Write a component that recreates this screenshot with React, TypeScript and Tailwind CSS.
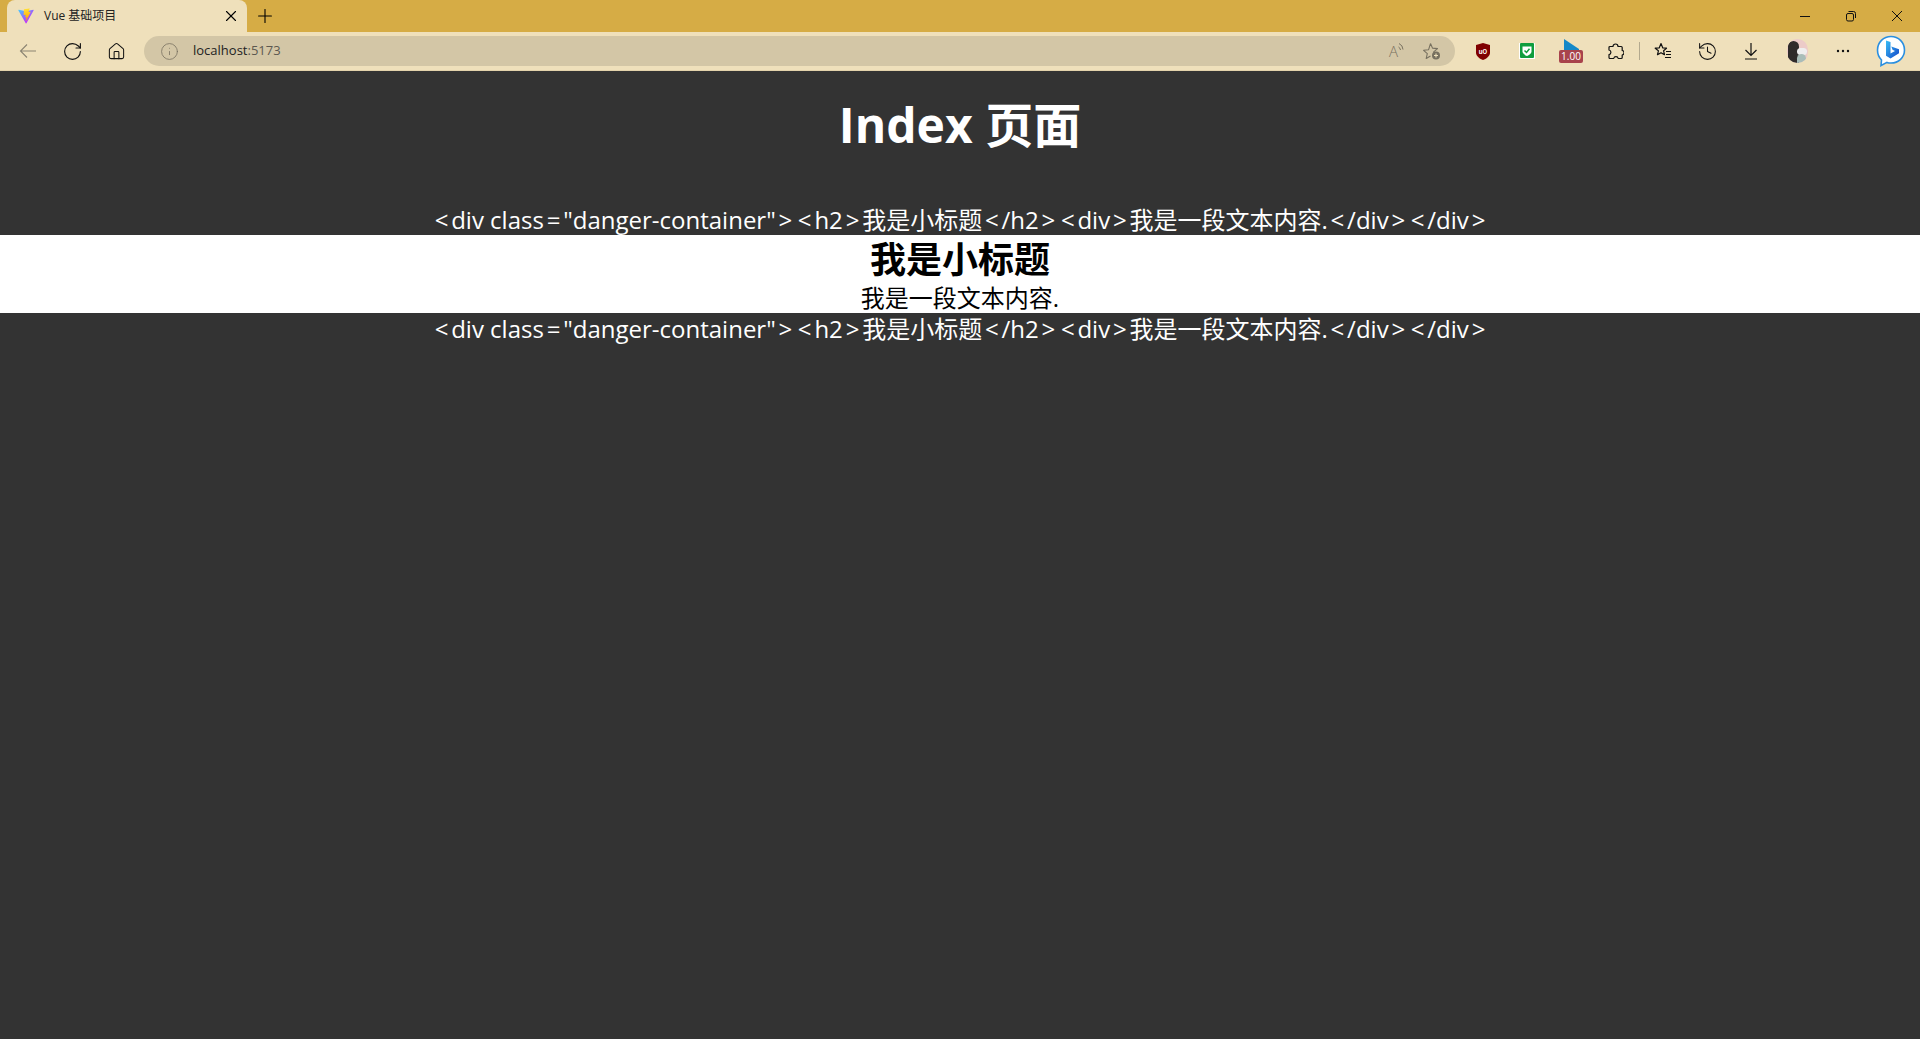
import React from 'react';
import { RotateCw, Home, Info, X, Plus, History } from 'lucide-react';

const font = "font-['Open_Sans','Noto_Sans_CJK_SC',sans-serif]";

const sourceLine = '<div class="danger-container"><h2>我是小标题</h2><div>我是一段文本内容.</div></div>';

// the screenshot's font has much wider < > = than Open Sans
const SourceLine = () => (
  <div className="text-[24px] leading-[31px]">
    {sourceLine.split(/([<>=])/).map((part, i) =>
      /^[<>=]$/.test(part) ? <span key={i} className="px-[2.8px]">{part}</span> : part
    )}
  </div>
);

const ViteLogo = () => (
  <svg width="16" height="16" viewBox="0 0 410 404">
    <defs>
      <linearGradient id="vbg" x1="6" y1="33" x2="235" y2="344" gradientUnits="userSpaceOnUse">
        <stop offset="0" stopColor="#41d1ff" />
        <stop offset="1" stopColor="#bd34fe" />
      </linearGradient>
      <linearGradient id="vbolt" x1="194" y1="8" x2="236" y2="292" gradientUnits="userSpaceOnUse">
        <stop offset="0" stopColor="#ffea83" />
        <stop offset="0.08" stopColor="#ffdd35" />
        <stop offset="1" stopColor="#ffa800" />
      </linearGradient>
    </defs>
    <path d="M399.641 59.5246L215.643 388.545C211.844 395.338 202.084 395.378 198.228 388.618L10.5817 59.5563C6.38087 52.1896 12.6802 43.2665 21.0281 44.7586L205.223 77.6824C206.398 77.8924 207.601 77.8904 208.776 77.6763L389.119 44.8058C397.439 43.2894 403.768 52.1434 399.641 59.5246Z" fill="url(#vbg)" />
    <path d="M292.965 1.5744L156.801 28.2552C154.563 28.6937 152.906 30.5903 152.771 32.8664L144.395 174.33C144.198 177.662 147.258 180.248 150.51 179.498L188.42 170.749C191.967 169.931 195.172 173.055 194.443 176.622L183.18 231.775C182.422 235.487 185.907 238.661 189.532 237.56L212.947 230.446C216.577 229.344 220.065 232.527 219.297 236.242L201.398 322.875C200.278 328.294 207.486 331.249 210.492 326.603L212.5 323.5L323.454 102.072C325.312 98.3645 322.108 94.137 318.036 94.9228L279.014 102.454C275.347 103.161 272.227 99.746 273.262 96.1583L298.731 7.86689C299.767 4.27314 296.636 0.855181 292.965 1.5744Z" fill="url(#vbolt)" />
  </svg>
);

const Slot: React.FC<{ children: React.ReactNode; className?: string }> = ({ children, className }) => (
  <div className={`w-[44px] h-[38px] flex items-center justify-center shrink-0 ${className ?? ''}`}>{children}</div>
);

const App: React.FC = () => {
  return (
    <div className={`h-[1039px] flex flex-col bg-[#333333] overflow-hidden ${font}`}>
      {/* tab strip */}
      <div className="h-8 bg-[#d6ac45] flex items-end shrink-0">
        <div className="ml-[7px] w-[240px] h-8 bg-[#efe0bb] rounded-t-lg flex items-center pl-[11px] pr-[7px]">
          <ViteLogo />
          <span className="ml-[10px] text-[12px] text-[#222] flex-1">Vue 基础项目</span>
          <X size={18} strokeWidth={1.5} className="text-black" />
        </div>
        <div className="ml-[7px] h-8 flex items-center">
          <Plus size={22} strokeWidth={1.2} className="text-black" />
        </div>
        <div className="flex-1" />
        <div className="h-8 flex items-center">
          <div className="w-[46px] flex justify-center">
            <svg width="12" height="12" viewBox="0 0 12 12" stroke="#111" strokeWidth="1"><path d="M1 6.5h10" /></svg>
          </div>
          <div className="w-[46px] flex justify-center">
            <svg width="12" height="12" viewBox="0 0 12 12" fill="none" stroke="#111" strokeWidth="1">
              <rect x="1.5" y="3.5" width="7" height="7.5" rx="1.5" />
              <path d="M3.5 1.5h5a2 2 0 0 1 2 2V8" />
            </svg>
          </div>
          <div className="w-[46px] flex justify-center">
            <svg width="12" height="12" viewBox="0 0 12 12" stroke="#111" strokeWidth="1"><path d="M1 1l10 10M11 1L1 11" /></svg>
          </div>
        </div>
      </div>

      {/* toolbar */}
      <div className="h-[38px] bg-[#efe0bb] border-b border-[#e3d3ac] flex items-center shrink-0 box-content pl-[6px]">
        <Slot>
          <svg width="18" height="16" viewBox="0 0 18 16" fill="none" stroke="#8b8472" strokeWidth="1.1">
            <path d="M17 8H1.5M8 1.5L1.5 8 8 14.5" />
          </svg>
        </Slot>
        <Slot><RotateCw size={21} strokeWidth={1.3} className="text-[#111]" /></Slot>
        <Slot><Home size={19} strokeWidth={1.3} className="text-[#111]" /></Slot>
        <div className="ml-[6px] w-[1311px] h-[30px] bg-[#d3c6a6] rounded-full flex items-center pl-[16px] pr-[14px] shrink-0">
          <Info size={19} strokeWidth={1} className="text-[#77705f]" />
          <span className="ml-[14px] text-[13px] text-[#222]">localhost<span className="text-[#5c5850]">:5173</span></span>
          <div className="flex-1" />
          <div className="flex items-start text-[#77705f] mr-[19px]">
            <span className="text-[15px] leading-[18px] font-light">A</span>
            <svg width="6" height="10" viewBox="0 0 6 10" fill="none" stroke="#77705f" strokeWidth="1">
              <path d="M0.5 5a4 4 0 0 1 2 3M1 1.5a7 7 0 0 1 4 6" />
            </svg>
          </div>
          <svg width="18" height="18" viewBox="0 0 18 18" fill="none" stroke="#77705f" strokeWidth="1.1">
            <path d="M7.5 1.5l2 4.6 5 .5-3.8 3.3 1 3.3M7.5 14l-4.3 2.5 1.1-4.9L.6 8.3l5-.6 1.9-6" strokeLinejoin="round" />
            <circle cx="13" cy="13.5" r="4" fill="#77705f" stroke="none" />
            <path d="M13 11.5v4M11 13.5h4" stroke="#efe0bb" />
          </svg>
        </div>

        {/* extensions */}
        <Slot className="ml-[6px]">
          <svg width="14" height="17" viewBox="0 0 14 17">
            <path d="M7 0 L14 2 V10 C14 13 10 16 7 17 C4 16 0 13 0 10 V2 Z" fill="#800000" />
            <text x="7" y="10.5" fontSize="6" fontWeight="700" fill="#fff" textAnchor="middle" fontFamily="Inter, sans-serif">uO</text>
          </svg>
        </Slot>
        <Slot>
          <svg width="16" height="16" viewBox="0 0 16 16">
            <rect width="16" height="16" fill="#fff" />
            <rect x="1" y="0" width="14" height="15" rx="1" fill="#0f9d3e" />
            <path d="M3.5 3.5 H12.5 V8.5 C12.5 10.5 9.5 12.5 8 13 C6.5 12.5 3.5 10.5 3.5 8.5 Z" fill="#fff" />
            <path d="M5.5 7.5 L7.5 9.5 L10.5 5.8" fill="none" stroke="#0f9d3e" strokeWidth="1.5" />
          </svg>
        </Slot>
        <Slot>
          <div className="relative w-[24px] h-[24px]">
            <svg className="absolute left-[5px] top-0" width="15" height="13" viewBox="0 0 15 13">
              <path d="M0 0 L15 10 V13 H0 Z" fill="#1488c8" />
            </svg>
            <div className="absolute left-0 bottom-0 w-[24px] h-[13px] rounded-[2px] bg-[#a8434c] text-white text-[10px] leading-[13px] text-center">1.00</div>
          </div>
        </Slot>
        <Slot>
          <svg width="17" height="17" viewBox="0 0 17 17" fill="none" stroke="#111" strokeWidth="1.2" strokeLinejoin="round">
            <path d="M6 3.5a2.5 2.5 0 0 1 5 0h3.2a1 1 0 0 1 1 1v3a2.3 2.3 0 0 1 0 4.5v2.5a1 1 0 0 1-1 1h-3a2.3 2.3 0 0 0-4.5 0H3a1 1 0 0 1-1-1v-2.8a2.4 2.4 0 0 0 0-4.7V4.5a1 1 0 0 1 1-1z" />
          </svg>
        </Slot>
        <div className="ml-[2px] w-px h-[18px] bg-[#b3a98e] shrink-0" />
        <Slot className="ml-[1px]">
          <svg width="18" height="18" viewBox="0 0 18 18" fill="none" stroke="#111" strokeWidth="1.2" strokeLinejoin="round">
            <path d="M7 1.5l1.8 4.4 3.7.3-2.9 2.6.9 3.9L7 10.7l-3.5 2 .9-3.9L1.2 6.2l4-.3z" />
            <path d="M12 9.5h5M12 12.5h5M11 15.5h6" />
          </svg>
        </Slot>
        <Slot><History size={21} strokeWidth={1.2} className="text-[#111]" /></Slot>
        <Slot>
          <svg width="16" height="18" viewBox="0 0 16 18" fill="none" stroke="#111" strokeWidth="1.2">
            <path d="M8 1v12M2.5 8L8 13.5 13.5 8M2 17h12" />
          </svg>
        </Slot>
        <Slot className="ml-[2px]">
          <div className="w-[21px] h-[24px] rounded-full bg-[#eccbc8] overflow-hidden relative">
            <div className="absolute left-[1px] top-[2px] w-[11px] h-[22px] bg-[#2f2b2a] rounded-t-full" />
            <div className="absolute right-[1px] top-[9px] w-[10px] h-[7px] bg-[#eeeeee] rounded-full" />
            <div className="absolute right-[2px] top-[15px] w-[9px] h-[9px] bg-[#a9bdb8] rounded-t-full" />
          </div>
        </Slot>
        <Slot className="ml-[2px]">
          <svg width="14" height="4" viewBox="0 0 14 4" fill="#111">
            <circle cx="2" cy="2" r="1.2" /><circle cx="7" cy="2" r="1.2" /><circle cx="12" cy="2" r="1.2" />
          </svg>
        </Slot>
        <div className="w-[52px] flex justify-center shrink-0">
          <svg width="30" height="32" viewBox="0 0 30 32">
            <defs>
              <linearGradient id="bing" x1="0" y1="0" x2="1" y2="1">
                <stop offset="0" stopColor="#37bdf5" />
                <stop offset="1" stopColor="#1447c9" />
              </linearGradient>
            </defs>
            <path d="M15 1.5 C22.5 1.5 28.5 7.5 28.5 15 C28.5 22.5 22.5 28 15 28 C13.5 28 12 27.8 11 27.4 L5 30.5 L5.5 25 C3 22.5 1.5 19 1.5 15 C1.5 7.5 7.5 1.5 15 1.5 Z" fill="#fff" stroke="#2a8fe0" strokeWidth="1.6" />
            <path d="M10 5.5 L14.5 7 V18.5 L19 16 L16.5 14.8 L15.3 11.5 L23 14.3 V18.3 L14.5 23.5 L10 20.8 Z" fill="url(#bing)" />
          </svg>
        </div>
      </div>

      {/* page */}
      <div className="flex-1 text-center text-white">
        <h1 className="mt-[21px] mb-[47px] text-[48px] leading-[65px] font-bold">Index 页面</h1>
        <SourceLine />
        <div className="bg-white text-black">
          <h2 className="pt-[3px] text-[36px] leading-[44px] font-bold">我是小标题</h2>
          <div className="text-[24px] leading-[31px]">我是一段文本内容.</div>
        </div>
        <SourceLine />
      </div>
    </div>
  );
};

export default App;
